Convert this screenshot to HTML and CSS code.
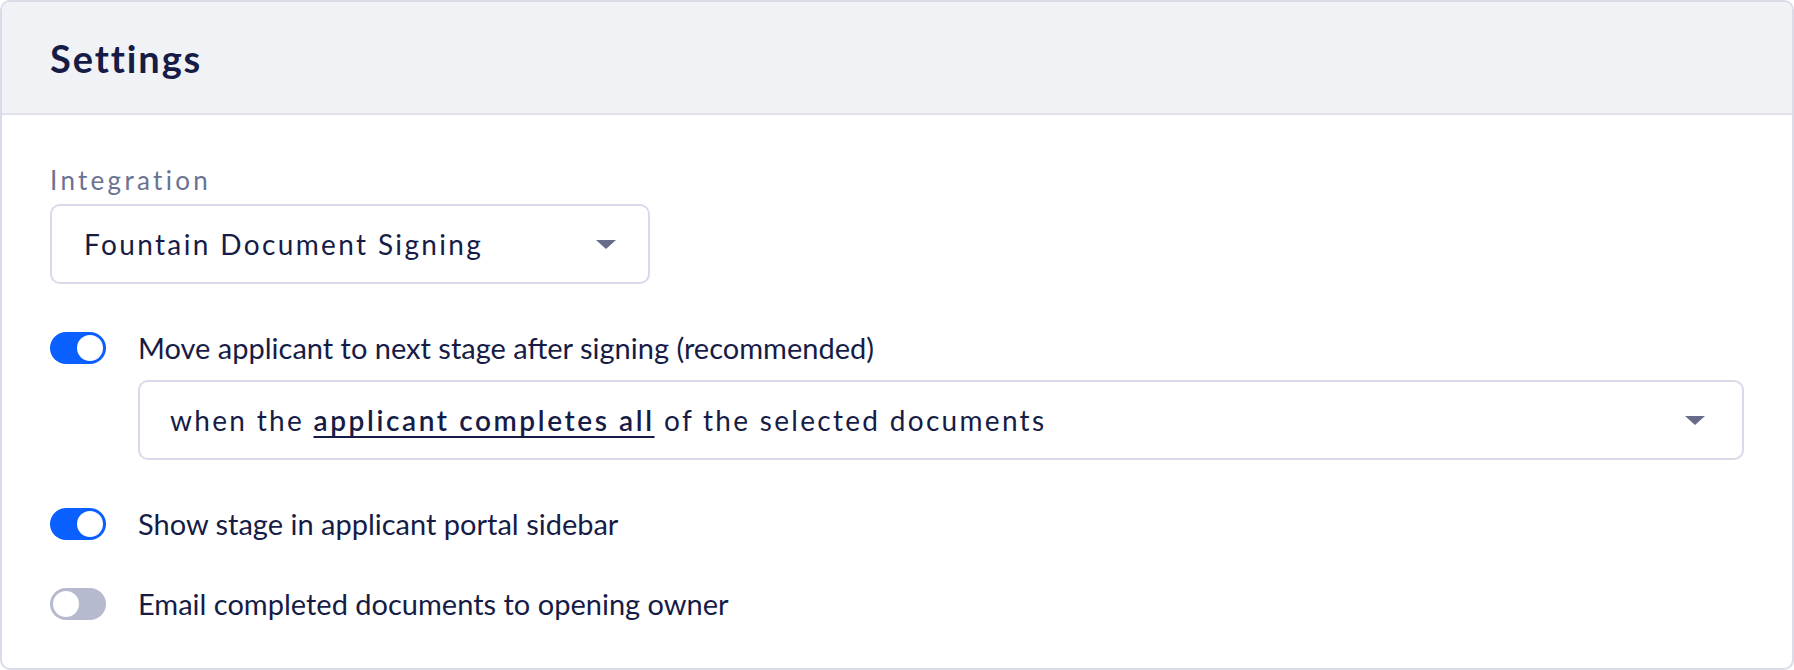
FILE: index.html
```html
<!DOCTYPE html>
<html lang="en">
<head>
<meta charset="utf-8">
<title>Settings</title>
<link rel="stylesheet" href="styles.css">
</head>
<body>
<section class="card">
  <header class="card-header">
    <h2 class="title">Settings</h2>
  </header>
  <div class="card-body">
    <div class="field">
      <label class="label">Integration</label>
      <div class="select select-sm">
        <span class="select-value">Fountain Document Signing</span>
        <span class="caret"></span>
      </div>
    </div>

    <div class="option option-first">
      <div class="toggle-row">
        <span class="toggle is-on"><span class="knob"></span></span>
        <span class="toggle-text">Move applicant to next stage after signing (recommended)</span>
      </div>
      <div class="select select-wide">
        <span class="select-value">when the <span class="emph">applicant completes all</span> of the selected documents</span>
        <span class="caret caret-wide"></span>
      </div>
    </div>

    <div class="option option-second">
      <div class="toggle-row">
        <span class="toggle is-on"><span class="knob"></span></span>
        <span class="toggle-text">Show stage in applicant portal sidebar</span>
      </div>
    </div>

    <div class="option option-third">
      <div class="toggle-row">
        <span class="toggle"><span class="knob"></span></span>
        <span class="toggle-text">Email completed documents to opening owner</span>
      </div>
    </div>
  </div>
</section>
</body>
</html>
```

FILE: styles.css
```css
html, body {
  margin: 0;
  padding: 0;
  background: #ffffff;
}

body {
  font-family: "Lato", "Inter", "Liberation Sans", sans-serif;
  color: #161c46;
}

.card {
  box-sizing: border-box;
  width: 1794px;
  height: 670px;
  border: 2px solid #d9dbe7;
  border-radius: 10px;
  overflow: hidden;
  background: #ffffff;
}

.card-header {
  box-sizing: border-box;
  height: 113px;
  background: #f1f2f6;
  border-bottom: 2px solid #e0e2eb;
  display: flex;
  align-items: center;
  padding: 0 48px;
}

.title {
  margin: 0;
  font-size: 38px;
  line-height: 1;
  font-weight: 700;
  letter-spacing: 1.9px;
  color: #161c46;
}

.card-body {
  padding: 49px 48px 0 48px;
}

.label {
  display: block;
  font-size: 26px;
  line-height: 32px;
  letter-spacing: 3.3px;
  color: #6b7292;
  margin-bottom: 8px;
}

.select {
  box-sizing: border-box;
  height: 80px;
  border: 2px solid #d8dbe7;
  border-radius: 10px;
  display: flex;
  align-items: center;
  justify-content: space-between;
  padding: 0 32px;
  font-size: 28px;
  letter-spacing: 2.36px;
  color: #161c46;
  background: #ffffff;
}

.select-sm {
  width: 600px;
}

.select-wide {
  margin-left: 88px;
  margin-top: 12px;
  padding-left: 30px;
  padding-right: 37px;
  letter-spacing: 2.3px;
}

.emph {
  font-weight: 600;
  letter-spacing: 2.6px;
  text-decoration: underline;
  text-decoration-thickness: 2px;
  text-underline-offset: 5px;
}

.caret {
  width: 0;
  height: 0;
  border-left: 10px solid transparent;
  border-right: 10px solid transparent;
  border-top: 9px solid #676c8b;
}

.option-first {
  margin-top: 44px;
}

.option-second {
  margin-top: 44px;
}

.option-third {
  margin-top: 40px;
}

.toggle-row {
  display: flex;
  align-items: center;
  height: 40px;
}

.toggle {
  box-sizing: border-box;
  width: 56px;
  height: 32px;
  border-radius: 16px;
  background: #b6bace;
  padding: 3px;
  display: flex;
  justify-content: flex-start;
  flex: none;
}

.toggle.is-on {
  background: #0a5fff;
  justify-content: flex-end;
}

.knob {
  width: 26px;
  height: 26px;
  border-radius: 50%;
  background: #ffffff;
}

.toggle-text {
  margin-left: 32px;
  font-size: 29px;
  line-height: 40px;
  color: #161c46;
}
```
